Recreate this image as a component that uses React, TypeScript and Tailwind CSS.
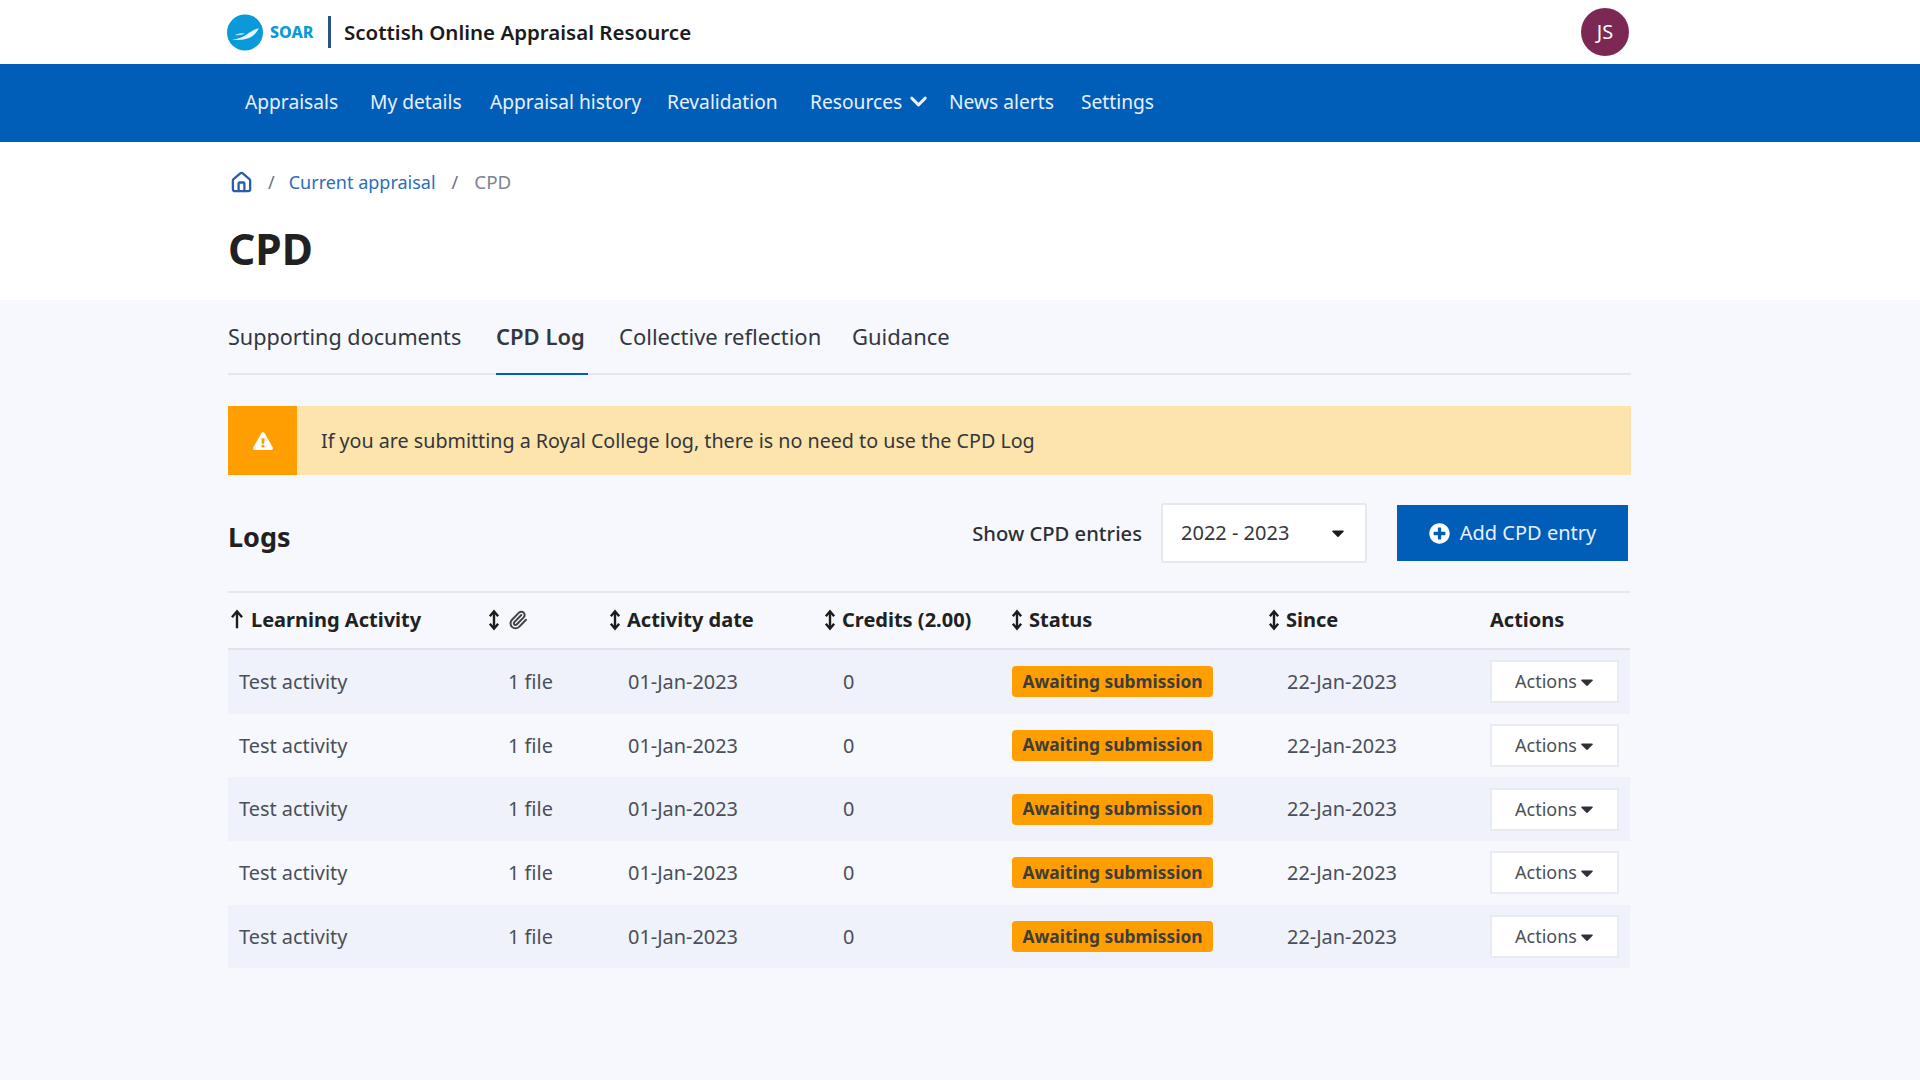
import { ChevronDown, House, Paperclip } from 'lucide-react';
import { FaCaretDown, FaExclamationTriangle, FaPlusCircle } from 'react-icons/fa';

const navItems = [
  { label: 'Appraisals', className: 'w-[125px]' },
  { label: 'My details', className: 'w-[120px]' },
  { label: 'Appraisal history', className: 'w-[177px]' },
  { label: 'Revalidation', className: 'w-[143px]' },
];

const rows = [1, 2, 3, 4, 5];
const gridCols = 'grid grid-cols-[260px_121px_215px_187px_257px_223px_139px]';
const headCols = 'grid grid-cols-[259px_121px_215px_187px_257px_223px_140px]';

function SortArrows({ up = false }: { up?: boolean }) {
  return (
    <svg viewBox="0 0 14 24" className="h-[22px] w-[14px] shrink-0 text-[#1c1c1c]" fill="none" stroke="currentColor" strokeWidth="2.6">
      <path d="M7 3v18" />
      <path d={up ? 'M1.5 9 7 2.5 12.5 9' : 'M2.5 8 7 2.5 11.5 8'} strokeLinejoin="miter" />
      {!up && <path d="M2.5 16 7 21.5 11.5 16" strokeLinejoin="miter" />}
    </svg>
  );
}

function Logo() {
  return (
    <div className="flex items-center">
      <svg viewBox="0 0 36 36" className="h-[37px] w-[36px]">
        <circle cx="18" cy="18" r="18" fill="#0b9ad9" />
        <path d="M5 25c6-.5 10-2 14-4.500 4-2.500 8-5.500 13-7-2 4-5 8-10 10-5 2-11 2.500-17 1.500z" fill="#e8f5fc" />
        <path d="M8 20.500c3-1.500 7-2 10-1.500-3 1.500-6 2-10 1.500z" fill="#e8f5fc" opacity="0.85" />
      </svg>
      <span className="ml-[7px] w-[58px] text-[16px] font-extrabold text-[#0b9ad9]">SOAR</span>
      <span className="h-[32px] w-[3px] bg-[#27518f]" />
      <span className="ml-[13px] text-[20.500px] font-semibold text-[#1b1b1b]">Scottish Online Appraisal Resource</span>
    </div>
  );
}

function Row({ shaded }: { shaded: boolean }) {
  return (
    <div className={`${gridCols} h-[63.700px] items-center text-[19.900px] text-[#4a4f57] ${shaded ? 'bg-[#eff2fa]' : ''}`}>
      <div className="pl-[11px]">Test activity</div>
      <div className="pl-[20px]">1 file</div>
      <div className="pl-[19px]">01-Jan-2023</div>
      <div className="pl-[19px]">0</div>
      <div className="pl-[1px]">
        <span className="flex h-[31px] w-[201px] items-center justify-center rounded-[4px] bg-[#ff9e00] pb-[2px] text-[17.400px] font-bold text-[#3d3d3d]">
          Awaiting submission
        </span>
      </div>
      <div className="pl-[19px]">22-Jan-2023</div>
      <div className="-ml-[1px]">
        <button className="flex h-[43px] w-[129px] items-center justify-center border-2 border-[#e8ebf1] bg-white pl-[3px] text-[18px] text-[#4a4f57]">
          Actions
          <FaCaretDown className="text-[20px] text-[#2e3238]" />
        </button>
      </div>
    </div>
  );
}

export default function App() {
  return (
    <div className="flex min-h-[1080px] flex-col bg-[#f6f8fd] font-['Noto_Sans','Open_Sans',sans-serif]">
      <header className="bg-white">
        <div className="ml-[227px] flex h-[64px] w-[1402px] items-center justify-between">
          <Logo />
          <div className="flex h-[48px] w-[48px] items-center justify-center rounded-full bg-[#7c2855] text-[20px] text-white">JS</div>
        </div>
      </header>

      <nav className="flex h-[78px] items-center bg-[#005eb8] pb-[2px] pl-[245px] text-[19.200px] text-[#e8f0fa]">
        {navItems.map((item) => (
          <span key={item.label} className={item.className}>
            {item.label}
          </span>
        ))}
        <span className="flex w-[139px] items-center">
          Resources
          <ChevronDown className="ml-[3px] h-[27px] w-[27px]" strokeWidth={2.6} />
        </span>
        <span className="w-[132px]">News alerts</span>
        <span>Settings</span>
      </nav>

      <section className="h-[158px] bg-white pl-[228px]">
        <div className="flex items-center pt-[26px] text-[18px]">
          <House className="ml-[2px] h-[23px] w-[23px] text-[#2b5da8]" strokeWidth={2.4} />
          <span className="ml-[15px] text-[#6b7280]">/</span>
          <span className="ml-[14px] text-[#2a6ebb]">Current appraisal</span>
          <span className="ml-[16px] text-[#6b7280]">/</span>
          <span className="ml-[16px] text-[18.800px] text-[#7b8593]">CPD</span>
        </div>
        <h1 className="mt-[25px] text-[42.500px] font-bold leading-[56px] text-[#212121]">CPD</h1>
      </section>

      <main className="ml-[228px] w-[1403px]">
        <div className="flex h-[75px] items-end border-b-2 border-[#e4e7ee] text-[22px] text-[#33373d]">
          <span className="mb-[20px] w-[268px] text-[21.600px]">Supporting documents</span>
          <span className="-mb-[2px] w-[92px] border-b-2 border-[#005eb8] pb-[20px] font-semibold">CPD Log</span>
          <span className="mb-[20px] ml-[31px] w-[233px]">Collective reflection</span>
          <span className="mb-[20px]">Guidance</span>
        </div>

        <div className="mt-[31px] flex h-[69px] items-center bg-[#fde4ac]">
          <div className="flex h-full w-[69px] items-center justify-center bg-[#ff9e00]">
            <FaExclamationTriangle className="text-[20px] text-white" />
          </div>
          <p className="ml-[24px] text-[19.700px] text-[#33373d]">
            If you are submitting a Royal College log, there is no need to use the CPD Log
          </p>
        </div>

        <div className="mt-[28px] flex h-[60px] items-center">
          <h2 className="pt-[9px] text-[27px] font-bold text-[#212121]">Logs</h2>
          <span className="ml-auto pt-[1px] text-[20.200px] font-medium text-[#2c2f34]">Show CPD entries</span>
          <div className="ml-[19px] flex h-[60px] w-[206px] items-center justify-between rounded-[3px] border-2 border-[#e6e8ed] bg-white pl-[18px] pr-[17px] text-[20px] text-[#33373d]">
            2022 - 2023
            <FaCaretDown className="text-[20px] text-[#1b1b1b]" />
          </div>
          <button className="ml-[30px] mr-[3px] flex h-[56px] w-[231px] items-center justify-center bg-[#005eb8] text-[20px] text-[#e8f0fa]">
            <FaPlusCircle className="mr-[10px] text-[21px] text-white" />
            Add CPD entry
          </button>
        </div>

        <div className="mt-[28px] mr-[1px] border-t-2 border-[#e4e7ee]">
          <div className={`${headCols} h-[57px] items-center border-b-2 border-[#dfe4ec] pb-[2px] text-[20px] font-bold text-[#212121]`}>
            <div className="flex items-center gap-[7px] pl-[2px]">
              <SortArrows up />
              Learning Activity
            </div>
            <div className="flex items-center gap-[7px]">
              <SortArrows />
              <Paperclip className="h-[20px] w-[20px] text-[#444]" strokeWidth={2.4} />
            </div>
            <div className="flex items-center gap-[5px]">
              <SortArrows />
              Activity date
            </div>
            <div className="flex items-center gap-[5px]">
              <SortArrows />
              Credits (2.00)
            </div>
            <div className="flex items-center gap-[5px]">
              <SortArrows />
              Status
            </div>
            <div className="flex items-center gap-[5px]">
              <SortArrows />
              Since
            </div>
            <div>Actions</div>
          </div>
          {rows.map((row) => (
            <Row key={row} shaded={row % 2 === 1} />
          ))}
        </div>
      </main>
    </div>
  );
}
